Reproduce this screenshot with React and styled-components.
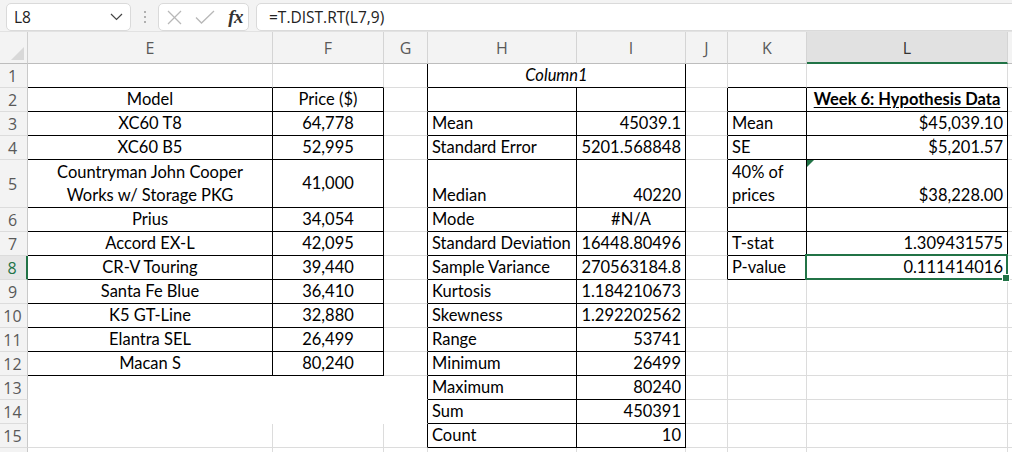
import React from "react";
import styled, { createGlobalStyle } from "styled-components";

const GREEN = "#217346";
const GRID = "#dcdcdc";
const CELL_FONT = `"Lato", "Liberation Sans", sans-serif`;
const UI_FONT = `"Open Sans", "Noto Sans", sans-serif`;

const Global = createGlobalStyle`
  html, body { margin: 0; padding: 0; background: #fff; }
  body { width: 1012px; height: 452px; overflow: hidden; }
`;

const Page = styled.div`
  width: 1012px;
  height: 452px;
  overflow: hidden;
  display: flex;
  flex-direction: column;
  background: #fff;
`;

const TopBar = styled.div`
  height: 32px;
  box-sizing: border-box;
  flex: none;
  background: #f3f3f3;
  border-bottom: 1px solid #e2e2e2;
  display: flex;
  align-items: flex-start;
  padding: 3px 0 0 6px;
`;

const Box = styled.div`
  height: 28px;
  box-sizing: border-box;
  background: #fff;
  border: 1px solid #dadada;
  border-radius: 5px;
  display: flex;
  align-items: center;
`;

const NameBox = styled(Box)`
  width: 125px;
  padding: 0 7px 0 7px;
  justify-content: space-between;
  font-family: ${UI_FONT};
  font-size: 15.5px;
  color: #222;
`;

const Grip = styled.div`
  width: 27px;
  height: 28px;
  display: flex;
  flex-direction: column;
  align-items: center;
  justify-content: center;
  gap: 3px;
  & > span {
    width: 2px;
    height: 2px;
    background: #9a9a9a;
    border-radius: 1px;
  }
`;

const FnBox = styled(Box)`
  width: 91px;
  padding: 0 5px 0 8px;
  justify-content: space-between;
`;

const FxLabel = styled.span`
  font-family: "Liberation Serif", "DejaVu Serif", serif;
  font-style: italic;
  font-weight: bold;
  font-size: 19px;
  color: #333;
  letter-spacing: -0.5px;
`;

const FormulaBox = styled(Box)`
  flex: 1;
  margin-left: 7px;
  margin-right: -8px;
  padding-left: 12px;
  font-family: ${UI_FONT};
  font-size: 15.5px;
  color: #222;
`;

const Sheet = styled.div`
  flex: 1;
  display: grid;
  grid-template-columns: 28px 245px 111px 44px 149px 109px 42px 79px 201px 1fr;
  grid-template-rows: 32px repeat(4, 24px) 48px repeat(10, 24px) 24px;
  overflow: hidden;
`;

const Corner = styled.div`
  position: relative;
  box-sizing: border-box;
  background: #f3f3f3;
  border-right: 1px solid #cfcfcf;
  border-bottom: 1px solid #bdbdbd;
  &::after {
    content: "";
    position: absolute;
    right: 3px;
    bottom: 3px;
    width: 0;
    height: 0;
    border-left: 13px solid transparent;
    border-bottom: 13px solid #d8d8d8;
  }
`;

const ColHeader = styled.div`
  box-sizing: border-box;
  background: ${(p) => (p.$active ? "#e1e1e1" : "#f3f3f3")};
  border-right: 1px solid #d4d4d4;
  border-bottom: ${(p) => (p.$active ? `2px solid ${GREEN}` : "1px solid #bdbdbd")};
  display: flex;
  align-items: center;
  justify-content: center;
  font-family: ${UI_FONT};
  font-size: 16px;
  color: ${(p) => (p.$active ? "#333" : "#595959")};
  padding-top: 1px;
`;

const RowHeader = styled.div`
  box-sizing: border-box;
  background: ${(p) => (p.$active ? "#e6e6e6" : "#f3f3f3")};
  border-right: ${(p) => (p.$active ? `2px solid ${GREEN}` : "1px solid #c9c9c9")};
  border-bottom: 1px solid #dcdcdc;
  display: flex;
  align-items: center;
  justify-content: center;
  font-family: ${UI_FONT};
  font-size: 16px;
  color: ${(p) => (p.$active ? GREEN : "#595959")};
  padding-right: 2px;
`;

const justify = { left: "flex-start", center: "center", right: "flex-end" };

const Cell = styled.div`
  position: relative;
  box-sizing: border-box;
  grid-column: span ${(p) => p.$span || 1};
  border-right: 1px solid ${(p) => p.$right};
  border-bottom: 1px solid ${(p) => p.$bottom};
  display: flex;
  align-items: ${(p) => (p.$valign === "center" ? "center" : "flex-end")};
  justify-content: ${(p) => justify[p.$align || "left"]};
  text-align: ${(p) => p.$align || "left"};
  padding: 0 4px 0 4px;
  font-family: ${CELL_FONT};
  font-size: 16.5px;
  line-height: 23px;
  color: #000;
  white-space: pre-line;
  font-style: ${(p) => (p.$italic ? "italic" : "normal")};
  font-weight: ${(p) => (p.$bold ? 700 : 400)};
  text-decoration: ${(p) => (p.$underline ? "underline" : "none")};
  text-underline-offset: 2px;
`;

const Selection = styled.div`
  position: absolute;
  left: -2px;
  top: -2px;
  right: -1px;
  bottom: -1px;
  border: 2px solid ${GREEN};
  pointer-events: none;
  z-index: 2;
  &::after {
    content: "";
    position: absolute;
    right: -4px;
    bottom: -4px;
    width: 6px;
    height: 6px;
    background: ${GREEN};
    border: 1px solid #fff;
  }
`;

const ErrorMark = styled.div`
  position: absolute;
  left: 0;
  top: 0;
  width: 0;
  height: 0;
  border-top: 7px solid ${GREEN};
  border-right: 7px solid transparent;
`;

const COL_LETTERS = ["E", "F", "G", "H", "I", "J", "K", "L", ""];

const tables = [
  { c0: 1, c1: 2, r0: 2, r1: 12 },
  { c0: 4, c1: 5, r0: 1, r1: 15 },
  { c0: 7, c1: 8, r0: 2, r1: 8 },
];
const inT = (r, c) =>
  tables.some((t) => r >= t.r0 && r <= t.r1 && c >= t.c0 && c <= t.c1);

const C = (text, opts = {}) => ({ text, ...opts });
const ctr = (text, opts = {}) => C(text, { align: "center", valign: "center", ...opts });
const R = (text, opts = {}) => C(text, { align: "right", ...opts });

const cars = [
  ["XC60 T8", "64,778"],
  ["XC60 B5", "52,995"],
  ["Countryman John Cooper\nWorks w/ Storage PKG", "41,000"],
  ["Prius", "34,054"],
  ["Accord EX-L", "42,095"],
  ["CR-V Touring", "39,440"],
  ["Santa Fe Blue", "36,410"],
  ["K5 GT-Line", "32,880"],
  ["Elantra SEL", "26,499"],
  ["Macan S", "80,240"],
];

const stats = [
  ["Mean", R("45039.1")],
  ["Standard Error", R("5201.568848")],
  ["Median", R("40220")],
  ["Mode", C("#N/A", { align: "center" })],
  ["Standard Deviation", R("16448.80496")],
  ["Sample Variance", R("270563184.8")],
  ["Kurtosis", R("1.184210673")],
  ["Skewness", R("1.292202562")],
  ["Range", R("53741")],
  ["Minimum", R("26499")],
  ["Maximum", R("80240")],
  ["Sum", R("450391")],
  ["Count", R("10")],
];

const hyp = {
  2: [C(""), C("Week 6: Hypothesis Data", { align: "center", bold: true, underline: true })],
  3: [C("Mean"), R("$45,039.10")],
  4: [C("SE"), R("$5,201.57")],
  5: [C("40% of\nprices"), R("$38,228.00", { error: true })],
  6: [C(""), C("")],
  7: [C("T-stat"), R("1.309431575")],
  8: [C("P-value"), R("0.111414016", { selected: true })],
};

function buildRow(r) {
  const cells = {};
  if (r === 1) cells[4] = C("Column1", { align: "center", italic: true, span: 2 });
  if (r === 2) {
    cells[1] = ctr("Model");
    cells[2] = ctr("Price ($)");
  }
  if (r >= 3 && r <= 12) {
    cells[1] = ctr(cars[r - 3][0]);
    cells[2] = ctr(cars[r - 3][1]);
  }
  if (r >= 3 && r <= 15) {
    cells[4] = C(stats[r - 3][0]);
    cells[5] = stats[r - 3][1];
  }
  if (hyp[r]) {
    cells[7] = hyp[r][0];
    cells[8] = hyp[r][1];
  }
  return cells;
}

const ROWS = Array.from({ length: 16 }, (_, i) => i + 1);

export default function App() {
  return (
    <Page>
      <Global />
      <TopBar>
        <NameBox>
          <span>L8</span>
          <svg width="13" height="8" viewBox="0 0 13 8">
            <polyline points="1,1 6.5,6.5 12,1" fill="none" stroke="#444" strokeWidth="1.2" />
          </svg>
        </NameBox>
        <Grip>
          <span />
          <span />
          <span />
        </Grip>
        <FnBox>
          <svg width="15" height="15" viewBox="0 0 15 15">
            <line x1="1" y1="1" x2="14" y2="14" stroke="#b8b8b8" strokeWidth="1.3" />
            <line x1="14" y1="1" x2="1" y2="14" stroke="#b8b8b8" strokeWidth="1.3" />
          </svg>
          <svg width="20" height="14" viewBox="0 0 20 14">
            <polyline points="1,7.5 6.5,13 19,1" fill="none" stroke="#b8b8b8" strokeWidth="1.3" />
          </svg>
          <FxLabel>fx</FxLabel>
        </FnBox>
        <FormulaBox>=T.DIST.RT(L7,9)</FormulaBox>
      </TopBar>
      <Sheet>
        <Corner />
        {COL_LETTERS.map((l, i) => (
          <ColHeader key={i} $active={l === "L"}>
            {l}
          </ColHeader>
        ))}
        {ROWS.map((r) => {
          const cells = buildRow(r);
          const out = [
            <RowHeader key={`h${r}`} $active={r === 8}>
              {r <= 15 ? r : ""}
            </RowHeader>,
          ];
          for (let c = 1; c <= 9; c++) {
            if (r === 1 && c === 5) continue;
            const spec = cells[c] || C("");
            const span = spec.span || 1;
            const lastC = c + span - 1;
            const blank = (r === 13 || r === 14) && c <= 3;
            const right =
              inT(r, lastC) || inT(r, lastC + 1) ? "#000" : blank ? "transparent" : GRID;
            const bottom = inT(r, c) || inT(r + 1, c) ? "#000" : blank ? "transparent" : GRID;
            out.push(
              <Cell
                key={`${r}-${c}`}
                $span={span}
                $right={right}
                $bottom={bottom}
                $align={spec.align}
                $valign={spec.valign}
                $bold={spec.bold}
                $italic={spec.italic}
                $underline={spec.underline}
              >
                {spec.error && <ErrorMark />}
                {spec.text}
                {spec.selected && <Selection />}
              </Cell>
            );
          }
          return out;
        })}
      </Sheet>
    </Page>
  );
}
